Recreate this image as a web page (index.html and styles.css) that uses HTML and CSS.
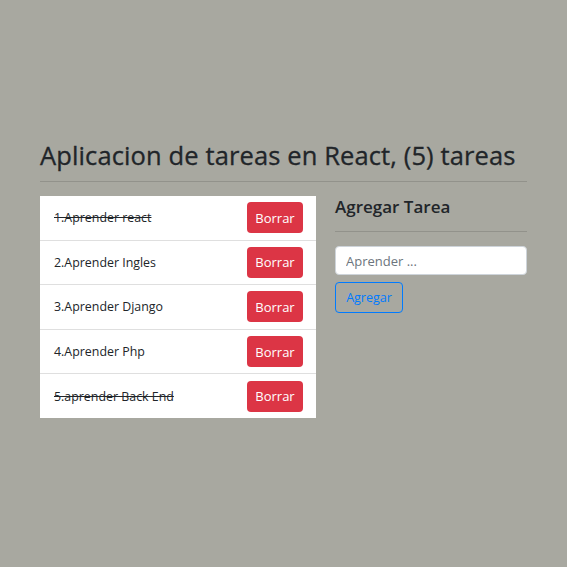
FILE: index.html
```html
<!DOCTYPE html>
<html lang="es">
<head>
<meta charset="utf-8">
<title>Tareas</title>
<link rel="stylesheet" href="styles.css">
</head>
<body>
<div class="container">
  <h1 class="title">Aplicacion de tareas en React, (5) tareas</h1>
  <hr class="rule">
  <div class="row">
    <ul class="list">
      <li class="item"><span class="done">1.Aprender react</span><button class="btn-danger">Borrar</button></li>
      <li class="item"><span>2.Aprender Ingles</span><button class="btn-danger">Borrar</button></li>
      <li class="item"><span>3.Aprender Django</span><button class="btn-danger">Borrar</button></li>
      <li class="item"><span>4.Aprender Php</span><button class="btn-danger">Borrar</button></li>
      <li class="item"><span class="done">5.aprender Back End</span><button class="btn-danger">Borrar</button></li>
    </ul>
    <div class="side">
      <h4 class="side-title">Agregar Tarea</h4>
      <hr class="rule side-rule">
      <input class="field" type="text" placeholder="Aprender ...">
      <button class="btn-outline">Agregar</button>
    </div>
  </div>
</div>
</body>
</html>
```
FILE: styles.css
```css
html, body {
  margin: 0;
  padding: 0;
  background: #a8a8a0;
  font-family: "Open Sans", "Noto Sans", sans-serif;
  color: #212529;
}
.container {
  width: 487px;
  margin: 0 0 0 40px;
  padding-top: 138px;
}
.title {
  margin: 0;
  font-size: 25.5px;
  font-weight: 500;
  letter-spacing: 0.12px;
  line-height: 34px;
  white-space: nowrap;
  -webkit-text-stroke: 0.3px #212529;
}
.rule {
  margin: 9px 0 13px;
  border: 0;
  border-top: 1px solid rgba(0,0,0,0.13);
}
.row {
  display: flex;
  gap: 19px;
  align-items: flex-start;
}
.list {
  list-style: none;
  margin: 1px 0 0;
  padding: 0;
  width: 276px;
  background: #fff;
}
.item {
  display: flex;
  justify-content: space-between;
  align-items: center;
  box-sizing: border-box;
  height: 44.6px;
  padding: 0 13px 0 14px;
  border-top: 1px solid #dfdfdf;
  font-size: 12.4px;
}
.item:first-child {
  border-top: 0;
  height: 43.6px;
}
.done {
  text-decoration: line-through;
}
.btn-danger {
  width: 56px;
  height: 31px;
  border: 0;
  border-radius: 4px;
  background: #dc3545;
  color: #fff;
  font-family: inherit;
  font-size: 13px;
  padding: 0;
}
.side {
  width: 192px;
}
.side-title {
  margin: 0;
  padding-top: 1px;
  font-size: 17px;
  font-weight: 600;
  line-height: 22px;
}
.side-rule {
  margin: 13px 0 14px;
}
.field {
  display: block;
  box-sizing: border-box;
  width: 192px;
  height: 29px;
  border: 1px solid #ced4da;
  border-radius: 4px;
  padding: 0 10px;
  font-family: inherit;
  font-size: 13px;
  color: #495057;
  background: #fff;
}
.field::placeholder {
  color: #6c757d;
}
.btn-outline {
  display: block;
  margin-top: 7px;
  box-sizing: border-box;
  width: 68px;
  height: 31px;
  border: 1px solid #007bff;
  border-radius: 4px;
  background: transparent;
  color: #007bff;
  font-family: inherit;
  font-size: 12.5px;
  padding: 0;
}
```
